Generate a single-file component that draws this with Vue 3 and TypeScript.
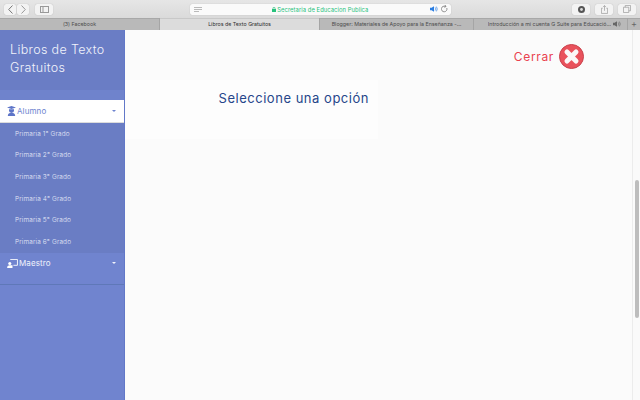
<script setup lang="ts">
const tabs = [
  { label: '(3) Facebook', active: false },
  { label: 'Libros de Texto Gratuitos', active: true },
  { label: 'Blogger: Materiales de Apoyo para la Enseñanza -…', active: false },
]
const grades = ['1°', '2°', '3°', '4°', '5°', '6°']
</script>

<template>
  <div class="window">
    <header class="toolbar">
      <div class="nav-group">
        <button class="tool-btn nav-btn">
          <svg width="5" height="9" viewBox="0 0 5 9"><path d="M4.500 .5 .7 4.500l3.800 4" fill="none" stroke="#777" /></svg>
        </button>
        <button class="tool-btn nav-btn">
          <svg width="5" height="9" viewBox="0 0 5 9"><path d="M.5 .5l3.800 4-3.800 4" fill="none" stroke="#999" /></svg>
        </button>
      </div>
      <button class="tool-btn sidebar-btn">
        <svg width="9" height="7" viewBox="0 0 9 7"><rect x=".5" y=".5" width="8" height="6" fill="none" stroke="#999" /><path d="M3 .5v6" stroke="#999" /></svg>
      </button>
      <div class="address">
        <svg class="reader" width="8" height="5" viewBox="0 0 8 5"><path d="M0 .5h8M0 2.500h8M0 4.500h5" stroke="#aaa" stroke-width=".8" /></svg>
        <span class="url">
          <svg width="4" height="5" viewBox="0 0 4 5"><rect y="2" width="4" height="3" fill="#27c27c" /><path d="M1 2.200V1.200a1 1 0 0 1 2 0v1" fill="none" stroke="#27c27c" stroke-width=".7" /></svg>
          Secretaria de Educacion Publica
        </span>
        <svg class="speaker" width="8" height="6" viewBox="0 0 10 7"><path d="M0 2h2l3-2v7L2 5H0z" fill="#2a7de1" /><path d="M6.500 1.500a3 3 0 0 1 0 4M8 .5a5 5 0 0 1 0 6" fill="none" stroke="#2a7de1" stroke-width=".8" /></svg>
        <svg width="7" height="8" viewBox="0 0 7 8"><path d="M5.800 3a2.800 2.800 0 1 1-1.300-1.500M4 0l1 1.600-1.800.6" fill="none" stroke="#777" stroke-width=".8" /></svg>
      </div>
      <div class="actions">
        <button class="tool-btn action-btn">
          <svg width="7" height="7" viewBox="0 0 8 8"><circle cx="4" cy="4" r="4" fill="#555" /><circle cx="4" cy="4" r="1.600" fill="#ddd" /></svg>
        </button>
        <button class="tool-btn action-btn">
          <svg width="7" height="9" viewBox="0 0 8 10"><path d="M2 3.500H.5v6h7v-6H6M4 6.500V.7M2.400 2 4 .5 5.600 2" fill="none" stroke="#999" stroke-width=".8" /></svg>
        </button>
        <button class="tool-btn action-btn">
          <svg width="8" height="8" viewBox="0 0 9 9"><path d="M2.500 2.500V.5h6v6h-2M.5 2.500h6v6h-6z" fill="none" stroke="#999" stroke-width=".8" /></svg>
        </button>
      </div>
    </header>

    <nav class="tabs">
      <div v-for="tab in tabs" :key="tab.label" class="tab" :class="{ active: tab.active }">{{ tab.label }}</div>
      <div class="tab last">
        <span class="tab-title">Introducción a mi cuenta G Suite para Educació…</span>
        <svg width="8" height="6" viewBox="0 0 10 7"><path d="M0 2h2l3-2v7L2 5H0z" fill="#666" /><path d="M6.500 1.500a3 3 0 0 1 0 4M8 .5a5 5 0 0 1 0 6" fill="none" stroke="#666" stroke-width=".8" /></svg>
      </div>
      <div class="tab-add">+</div>
    </nav>

    <div class="page">
      <aside class="sidebar">
        <h1 class="brand">Libros de Texto Gratuitos</h1>
        <div class="band"></div>
        <div class="menu-item open">
          <svg width="9" height="10" viewBox="0 0 9 10"><path d="M0 1.500 4.500 0 9 1.500 4.500 3z M2 3.200h5v1.600a2.500 2 0 0 1-5 0z M.8 10c0-2.400 1.500-3.200 3.700-3.200S8.200 7.600 8.200 10z" fill="#5e75c8" /></svg>
          <span>Alumno</span>
          <i class="caret"></i>
        </div>
        <ul class="submenu">
          <li v-for="g in grades" :key="g">Primaria {{ g }} Grado</li>
        </ul>
        <div class="menu-item">
          <svg width="11" height="9" viewBox="0 0 12 10"><path d="M3.500 .5h8v6.500H7" fill="none" stroke="#fff" /><circle cx="3" cy="5" r="1.700" fill="#fff" /><path d="M0 10c0-2 1-3 3-3h3v3z" fill="#fff" /></svg>
          <span>Maestro</span>
          <i class="caret"></i>
        </div>
      </aside>

      <main class="content">
        <div class="close-row">
          <span class="close-label">Cerrar</span>
          <svg class="close-icon" width="25" height="25" viewBox="0 0 25 25">
            <circle cx="12.500" cy="12.500" r="12" fill="#e9525c" stroke="#c9434d" />
            <path d="M8 8l9 9M17 8l-9 9" stroke="#fbf8f8" stroke-width="5" stroke-linecap="round" />
          </svg>
        </div>
        <section class="panel">
          <h2>Seleccione una opción</h2>
        </section>
        <div class="scrollbar"><div class="thumb"></div></div>
      </main>
    </div>
  </div>
</template>

<style>
html, body { margin: 0; overflow: hidden; }
</style>

<style scoped>
.window {
  width: 640px;
  height: 400px;
  display: flex;
  flex-direction: column;
  overflow: hidden;
  font-family: Inter, "Liberation Sans", sans-serif;
}
.toolbar {
  height: 18px;
  display: flex;
  align-items: center;
  padding: 0 4px;
  background: linear-gradient(#e6e6e6, #dadada);
  box-sizing: border-box;
}
.tool-btn {
  height: 11px;
  padding: 0;
  border: none;
  border-radius: 2px;
  background: #f3f3f3;
  display: flex;
  align-items: center;
  justify-content: center;
  box-shadow: 0 0 1px rgba(0, 0, 0, .25);
}
.nav-group { display: flex; gap: 1px; }
.nav-btn { width: 12px; }
.sidebar-btn { width: 18px; margin-left: 6px; }
.address {
  width: 261px;
  height: 11px;
  margin-left: 137px;
  box-sizing: border-box;
  padding: 0 3px 0 4px;
  display: flex;
  align-items: center;
  gap: 3px;
  border-radius: 2px;
  background: #fafafa;
  box-shadow: 0 0 1px rgba(0, 0, 0, .25);
}
.reader { flex: none; }
.url {
  flex: 1;
  font-size: 5.800px;
  color: #27c27c;
  text-align: center;
  white-space: nowrap;
  letter-spacing: .08px;
  padding-left: 8px;
}
.actions { display: flex; gap: 5px; margin-left: auto; }
.action-btn { width: 18px; }
.tabs {
  height: 12px;
  display: flex;
  background: #b9b9b9;
  font-size: 5.300px;
  color: #4c4c4c;
  box-shadow: inset 0 1px 0 #a8a8a8;
}
.tab {
  width: 160px;
  display: flex;
  align-items: center;
  justify-content: center;
  white-space: nowrap;
  overflow: hidden;
  border-right: 1px solid #a5a5a5;
  box-sizing: border-box;
}
.tab.active { background: #dcdcdc; color: #2e2e2e; box-shadow: inset 0 1px 0 #c8c8c8; }
.tab:nth-child(3), .tab.last { width: 154px; }
.tab.last { gap: 2px; padding-left: 8px; }
.tab-title { overflow: hidden; }
.tab-add { flex: 1; text-align: center; font-size: 9px; line-height: 11px; color: #666; }
.page { flex: 1; display: flex; min-height: 0; }
.sidebar {
  width: 125px;
  flex: none;
  background: #7084cf;
  border-right: 1px solid #6278c8;
  box-sizing: border-box;
  height: 100%;
  color: #fff;
}
.brand {
  margin: 0;
  height: 60px;
  box-sizing: border-box;
  padding: 11px 10px 0 10px;
  background: #6a7dc5;
  font-size: 12.500px;
  font-weight: 300;
  line-height: 18px;
  letter-spacing: .35px;
  color: #f1f3fb;
}
.band { height: 10px; background: #6f83cc; }
.menu-item {
  height: 23px;
  display: flex;
  align-items: center;
  gap: 1px;
  padding: 0 7px;
  font-size: 8px;
  letter-spacing: .1px;
  color: #f1f3fb;
  box-sizing: border-box;
}
.menu-item.open {
  background: #fff;
  color: #6e84d0;
  border-bottom: 1px solid #dcdcdc;
}
.caret {
  margin-left: auto;
  margin-right: 1px;
  width: 0;
  height: 0;
  border-left: 2.500px solid transparent;
  border-right: 2.500px solid transparent;
  border-top: 2.500px solid currentColor;
}
.submenu {
  list-style: none;
  margin: 0;
  padding: 0;
  background: #6a7dc4;
  font-size: 6.500px;
  font-weight: 300;
  letter-spacing: .14px;
  color: #e6eaf8;
}
.submenu li {
  height: 21.600px;
  display: flex;
  align-items: center;
  padding-left: 15px;
}
.submenu + .menu-item {
  height: 32px;
  padding-bottom: 10px;
  border-bottom: 1px solid #5f78b8;
}
.content {
  flex: 1;
  background: #fbfbfb;
  position: relative;
  min-width: 0;
}
.close-row {
  display: flex;
  align-items: center;
  justify-content: flex-end;
  gap: 5px;
  padding: 14px 56px 0 0;
}
.close-label { font-size: 12px; color: #e9424f; letter-spacing: .65px; }
.panel {
  width: 253px;
  height: 59px;
  margin-top: 11px;
  background: #fdfdfd;
  box-sizing: border-box;
  display: flex;
  justify-content: flex-end;
  padding: 9px 9px 0 0;
}
.panel h2 {
  margin: 0;
  font-size: 13px;
  font-weight: 400;
  line-height: 18px;
  letter-spacing: .52px;
  color: #26468a;
}
.scrollbar {
  position: absolute;
  top: 0;
  right: 0;
  bottom: 0;
  width: 8px;
  background: #fafafa;
  border-left: 1px solid #ececec;
  box-sizing: border-box;
}
.thumb {
  position: absolute;
  top: 150px;
  left: 2px;
  width: 4px;
  height: 138px;
  border-radius: 2px;
  background: #bdbdbd;
}
</style>
